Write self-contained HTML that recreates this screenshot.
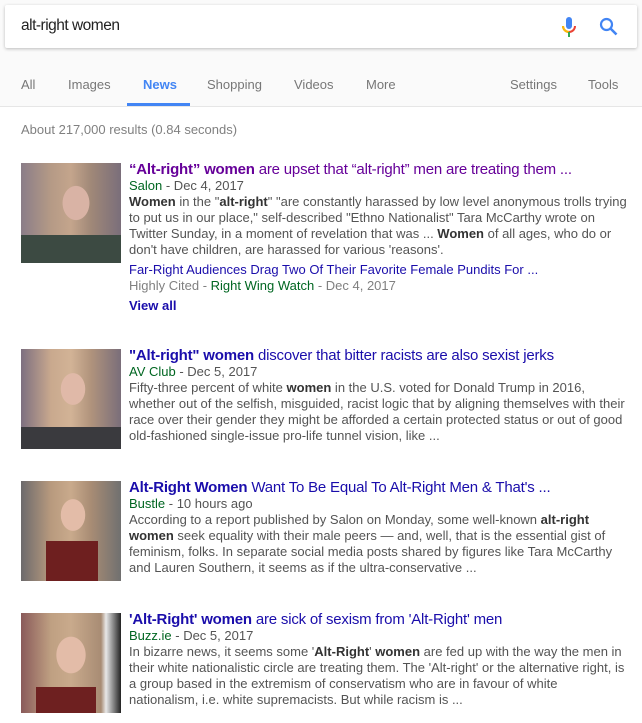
<!DOCTYPE html>
<html><head><meta charset="utf-8"><style>
*{margin:0;padding:0;box-sizing:border-box}
body{width:642px;height:723px;overflow:hidden;background:#fff;font-family:"Liberation Sans",Arial,sans-serif;position:relative;color:#545454}
#hdr{position:absolute;left:0;top:0;width:642px;height:107px;background:#fafafa;border-bottom:1px solid #e6e6e6}
#sb{position:absolute;left:5px;top:5px;width:632px;height:43px;background:#fff;border-radius:2px;box-shadow:0 1px 3px rgba(0,0,0,.25)}
#sb .q{position:absolute;left:16px;top:12px;font-size:15.5px;letter-spacing:-0.5px;color:#222}
.tab{position:absolute;top:77px;font-size:13px;color:#777}
#ul{position:absolute;left:127px;top:103px;width:63px;height:3px;background:#4285f4}
#stats{position:absolute;left:21px;top:122px;font-size:13px;color:#808080}
.r{position:absolute;left:129px;width:500px;font-size:13px;line-height:16px}
.t{font-size:15px;letter-spacing:-0.2px;line-height:18px;color:#1a0dab;white-space:nowrap;margin-bottom:-1px}
.t.v{color:#660099}
.src{color:#006621}
.s{color:#545454}
b{color:#333}
.t b{color:inherit}
.im{position:absolute;left:21px;width:100px;height:100px}
.l{color:#1a0dab}
</style></head><body>
<div id="hdr"></div>
<div id="sb"><span class="q">alt-right women</span>
<svg style="position:absolute;left:556px;top:11px" width="16" height="24" viewBox="0 0 16 24"><rect x="5" y="1" width="6" height="12" rx="3" fill="#4285f4"/><path d="M2 10a6 6 0 0 0 12 0" stroke="#ea4335" stroke-width="2" fill="none"/><path d="M2 10a6 6 0 0 0 6 6" stroke="#fbbc05" stroke-width="2" fill="none"/><rect x="7" y="16" width="2" height="5" fill="#34a853"/></svg>
<svg style="position:absolute;left:594px;top:12px" width="20" height="20" viewBox="0 0 20 20"><circle cx="7.5" cy="7.5" r="5.5" stroke="#4285f4" stroke-width="2.2" fill="none"/><path d="M11.5 11.5l6 6" stroke="#4285f4" stroke-width="2.6"/></svg>
</div>
<span class="tab" style="left:21px">All</span>
<span class="tab" style="left:68px">Images</span>
<span class="tab" style="left:143px;color:#4285f4;font-weight:bold">News</span>
<span class="tab" style="left:207px">Shopping</span>
<span class="tab" style="left:294px">Videos</span>
<span class="tab" style="left:366px">More</span>
<span class="tab" style="left:510px">Settings</span>
<span class="tab" style="left:588px">Tools</span>
<div id="ul"></div>
<div id="stats">About 217,000 results (0.84 seconds)</div>

<div class="im" style="top:163px;background:radial-gradient(ellipse 22px 28px at 55px 40px,#d9b3a5 60%,transparent 62%),linear-gradient(90deg,#8a7d88 0,#b59a86 30%,#c4a58c 50%,#a08878 70%,#7a6e7a 100%)"><div style="position:absolute;left:0;bottom:0;width:100px;height:28px;background:#3c4a42"></div></div>
<div class="r" style="top:161px">
<div class="t v"><b>“Alt-right” women</b> are upset that “alt-right” men are treating them ...</div>
<div><span class="src">Salon</span> - Dec 4, 2017</div>
<div class="s"><b>Women</b> in the "<b>alt-right</b>" "are constantly harassed by low level anonymous trolls trying to put us in our place," self-described "Ethno Nationalist" Tara McCarthy wrote on Twitter Sunday, in a moment of revelation that was ... <b>Women</b> of all ages, who do or don't have children, are harassed for various 'reasons'.</div>
<div class="l" style="margin-top:4px">Far-Right Audiences Drag Two Of Their Favorite Female Pundits For ...</div>
<div style="color:#808080">Highly Cited - <span class="src">Right Wing Watch</span> - Dec 4, 2017</div>
<div style="margin-top:4px;color:#1a0dab;font-weight:bold">View all</div>
</div>

<div class="im" style="top:349px;background:radial-gradient(ellipse 20px 26px at 52px 40px,#e0b9a8 60%,transparent 62%),linear-gradient(90deg,#7d6f80 0,#c9a98e 30%,#d2b396 50%,#b0937c 70%,#7a6e7a 100%)"><div style="position:absolute;left:0;bottom:0;width:100px;height:22px;background:#3a3a3e"></div></div>
<div class="r" style="top:347px">
<div class="t"><b>"Alt-right" women</b> discover that bitter racists are also sexist jerks</div>
<div><span class="src">AV Club</span> - Dec 5, 2017</div>
<div class="s">Fifty-three percent of white <b>women</b> in the U.S. voted for Donald Trump in 2016, whether out of the selfish, misguided, racist logic that by aligning themselves with their race over their gender they might be afforded a certain protected status or out of good old-fashioned single-issue pro-life tunnel vision, like ...</div>
</div>

<div class="im" style="top:481px;background:radial-gradient(ellipse 20px 26px at 52px 34px,#e3bca8 60%,transparent 62%),linear-gradient(90deg,#6c6a6c 0,#b89a7e 30%,#c9aa8c 50%,#a88c74 70%,#707070 100%)"><div style="position:absolute;left:25px;bottom:0;width:52px;height:40px;background:#6e1f1f"></div></div>
<div class="r" style="top:479px">
<div class="t"><b>Alt-Right Women</b> Want To Be Equal To Alt-Right Men &amp; That's ...</div>
<div><span class="src">Bustle</span> - 10 hours ago</div>
<div class="s">According to a report published by Salon on Monday, some well-known <b>alt-right women</b> seek equality with their male peers — and, well, that is the essential gist of feminism, folks. In separate social media posts shared by figures like Tara McCarthy and Lauren Southern, it seems as if the ultra-conservative ...</div>
</div>

<div class="im" style="top:613px;background:radial-gradient(ellipse 24px 30px at 50px 42px,#e3bca8 60%,transparent 62%),linear-gradient(90deg,#8a5a5a 0,#bfa082 30%,#c9aa8c 50%,#a88c74 80%,#e8e8e8 85%,#222 100%)"><div style="position:absolute;left:15px;bottom:0;width:60px;height:26px;background:#6e2020"></div></div>
<div class="r" style="top:611px">
<div class="t"><b>'Alt-Right' women</b> are sick of sexism from 'Alt-Right' men</div>
<div><span class="src">Buzz.ie</span> - Dec 5, 2017</div>
<div class="s">In bizarre news, it seems some '<b>Alt-Right</b>' <b>women</b> are fed up with the way the men in their white nationalistic circle are treating them. The 'Alt-right' or the alternative right, is a group based in the extremism of conservatism who are in favour of white<br>nationalism, i.e. white supremacists. But while racism is ...</div>
</div>
</body></html>
